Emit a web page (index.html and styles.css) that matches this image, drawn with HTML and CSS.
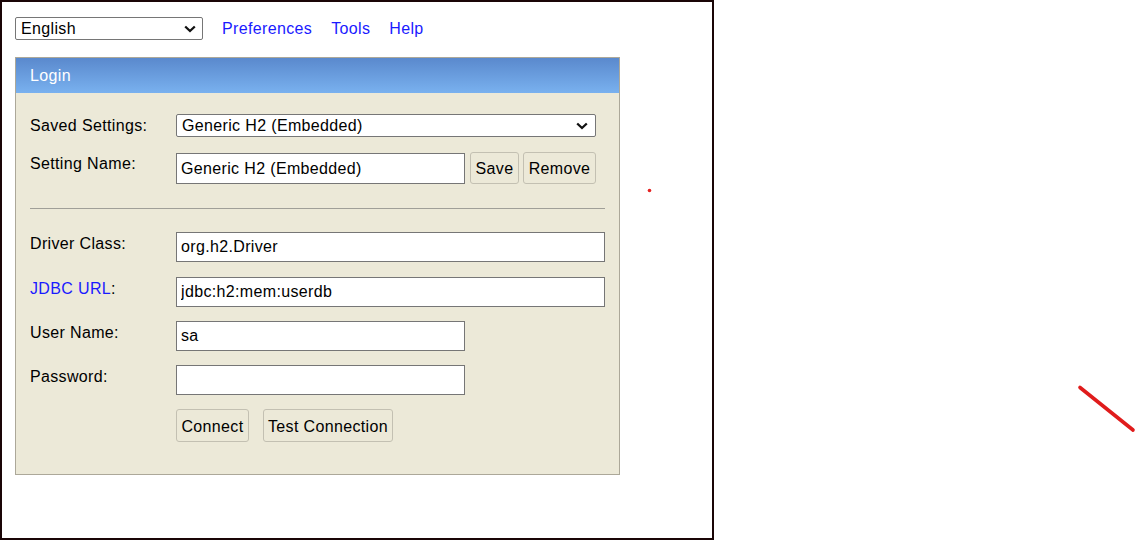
FILE: index.html
```html
<!DOCTYPE html>
<html lang="en">
<head>
<meta charset="utf-8">
<title>H2 Console</title>
<link rel="stylesheet" href="styles.css">
</head>
<body>
<div class="frame">
  <div class="topbar">
    <div class="selwrap">
      <select class="lang">
        <option>English</option>
      </select>
      <svg class="chev" width="12" height="8" viewBox="0 0 12 8"><path d="M1.2 1.5 L6 6 L10.8 1.5" fill="none" stroke="#111" stroke-width="2.3"/></svg>
    </div>
    <nav class="nav">
      <a href="#">Preferences</a>
      <a href="#">Tools</a>
      <a href="#">Help</a>
    </nav>
  </div>
  <div class="login">
    <div class="login-head">Login</div>
    <div class="login-body">
      <div class="row">
        <label class="lbl">Saved Settings:</label>
        <div class="selwrap">
          <select class="sel-wide"><option>Generic H2 (Embedded)</option></select>
          <svg class="chev chev-wide" width="12" height="8" viewBox="0 0 12 8"><path d="M1.2 1.5 L6 6 L10.8 1.5" fill="none" stroke="#111" stroke-width="2.3"/></svg>
        </div>
      </div>
      <div class="row row-name">
        <label class="lbl">Setting Name:</label>
        <input class="txt txt-short txt-name" type="text" value="Generic H2 (Embedded)">
        <button class="btn btn-save">Save</button>
        <button class="btn btn-remove">Remove</button>
      </div>
      <hr class="sep">
      <div class="row">
        <label class="lbl">Driver Class:</label>
        <input class="txt txt-long" type="text" value="org.h2.Driver">
      </div>
      <div class="row row-next">
        <label class="lbl"><a href="#">JDBC URL</a>:</label>
        <input class="txt txt-long" type="text" value="jdbc:h2:mem:userdb">
      </div>
      <div class="row row-next2">
        <label class="lbl">User Name:</label>
        <input class="txt txt-short" type="text" value="sa">
      </div>
      <div class="row row-next2">
        <label class="lbl">Password:</label>
        <input class="txt txt-short" type="password" value="">
      </div>
      <div class="row row-next2 actions">
        <span class="lbl"></span>
        <button class="btn btn-big btn-connect">Connect</button>
        <button class="btn btn-big btn-test">Test Connection</button>
      </div>
    </div>
  </div>
</div>
<svg class="marks" width="1136" height="540" viewBox="0 0 1136 540">
  <circle cx="649.5" cy="190.5" r="1.8" fill="#e52222"/>
  <line x1="1080" y1="387.5" x2="1133" y2="430" stroke="#e01c1c" stroke-width="3.6" stroke-linecap="round"/>
</svg>
</body>
</html>
```

FILE: styles.css
```css
html, body {
  margin: 0;
  padding: 0;
  background: #ffffff;
}

body {
  font-family: "Liberation Sans", Arial, sans-serif;
  font-size: 16px;
  letter-spacing: 0.35px;
  color: #000;
  position: relative;
  width: 1136px;
  height: 540px;
  overflow: hidden;
}

.frame {
  box-sizing: border-box;
  width: 714px;
  height: 540px;
  border: 2px solid #1a0506;
  padding: 15px 0 0 13px;
}

.topbar {
  display: flex;
  align-items: center;
  height: 23px;
}

.selwrap {
  position: relative;
  display: flex;
}

.chev {
  position: absolute;
  top: 8px;
  right: 7px;
  pointer-events: none;
}

.chev-wide {
  right: 8px;
}

.lang,
.sel-wide {
  -webkit-appearance: none;
  appearance: none;
  box-sizing: border-box;
  height: 23px;
  font-family: "Liberation Sans", Arial, sans-serif;
  font-size: 16px;
  letter-spacing: 0.35px;
  color: #000;
  background: #fff;
  border: 1px solid #767676;
  border-radius: 2px;
  margin: 0;
}

.lang {
  width: 188px;
  padding: 0 0 0 5px;
}

.sel-wide {
  width: 420px;
  padding: 0 0 0 5px;
}

.nav {
  display: flex;
  margin-left: 19px;
  gap: 19px;
}

a {
  color: #1a1aff;
  text-decoration: none;
}

.login {
  box-sizing: border-box;
  width: 605px;
  margin-top: 17px;
  border: 1px solid #aca899;
}

.login-head {
  height: 35px;
  line-height: 35px;
  padding-left: 14px;
  color: #fff;
  background: linear-gradient(to bottom, #5a89cd 0%, #79b1ef 100%);
}

.login-body {
  background: #ece9d8;
  padding: 21px 14px 32px 14px;
}

.row {
  display: flex;
  align-items: flex-start;
}

.lbl {
  flex: 0 0 146px;
  width: 146px;
  padding-top: 3px;
  line-height: 18px;
}

.row-name {
  margin-top: 15px;
}

.txt {
  box-sizing: border-box;
  height: 30px;
  font-family: "Liberation Sans", Arial, sans-serif;
  font-size: 16px;
  letter-spacing: 0.35px;
  color: #000;
  background: #fff;
  border: 1px solid #767676;
  border-radius: 0;
  padding: 0 4px;
  margin: 0;
}

.txt-short {
  width: 289px;
}

.txt-long {
  width: 429px;
}

.txt-name {
  height: 31px;
  margin-top: 1px;
}

.btn {
  box-sizing: border-box;
  height: 32px;
  font-family: "Liberation Sans", Arial, sans-serif;
  font-size: 16px;
  letter-spacing: 0.35px;
  color: #000;
  background: #ece9d8;
  border: 1px solid #c3c0b2;
  border-radius: 3px;
  padding: 2px 4px 0 4px;
  margin: 0;
}

.btn-save {
  margin-left: 5px;
  width: 49px;
}

.btn-remove {
  margin-left: 4px;
  width: 73px;
}

.sep {
  height: 0;
  margin: 24px 0 23px 0;
  border: 0;
  border-top: 1px solid #a09f98;
}

.row-next {
  margin-top: 15px;
}

.row-next2 {
  margin-top: 14px;
}

.btn-big {
  height: 33px;
}

.btn-connect {
  width: 73px;
}

.btn-test {
  margin-left: 14px;
  width: 130px;
}

.marks {
  position: absolute;
  left: 0;
  top: 0;
  pointer-events: none;
}
```
